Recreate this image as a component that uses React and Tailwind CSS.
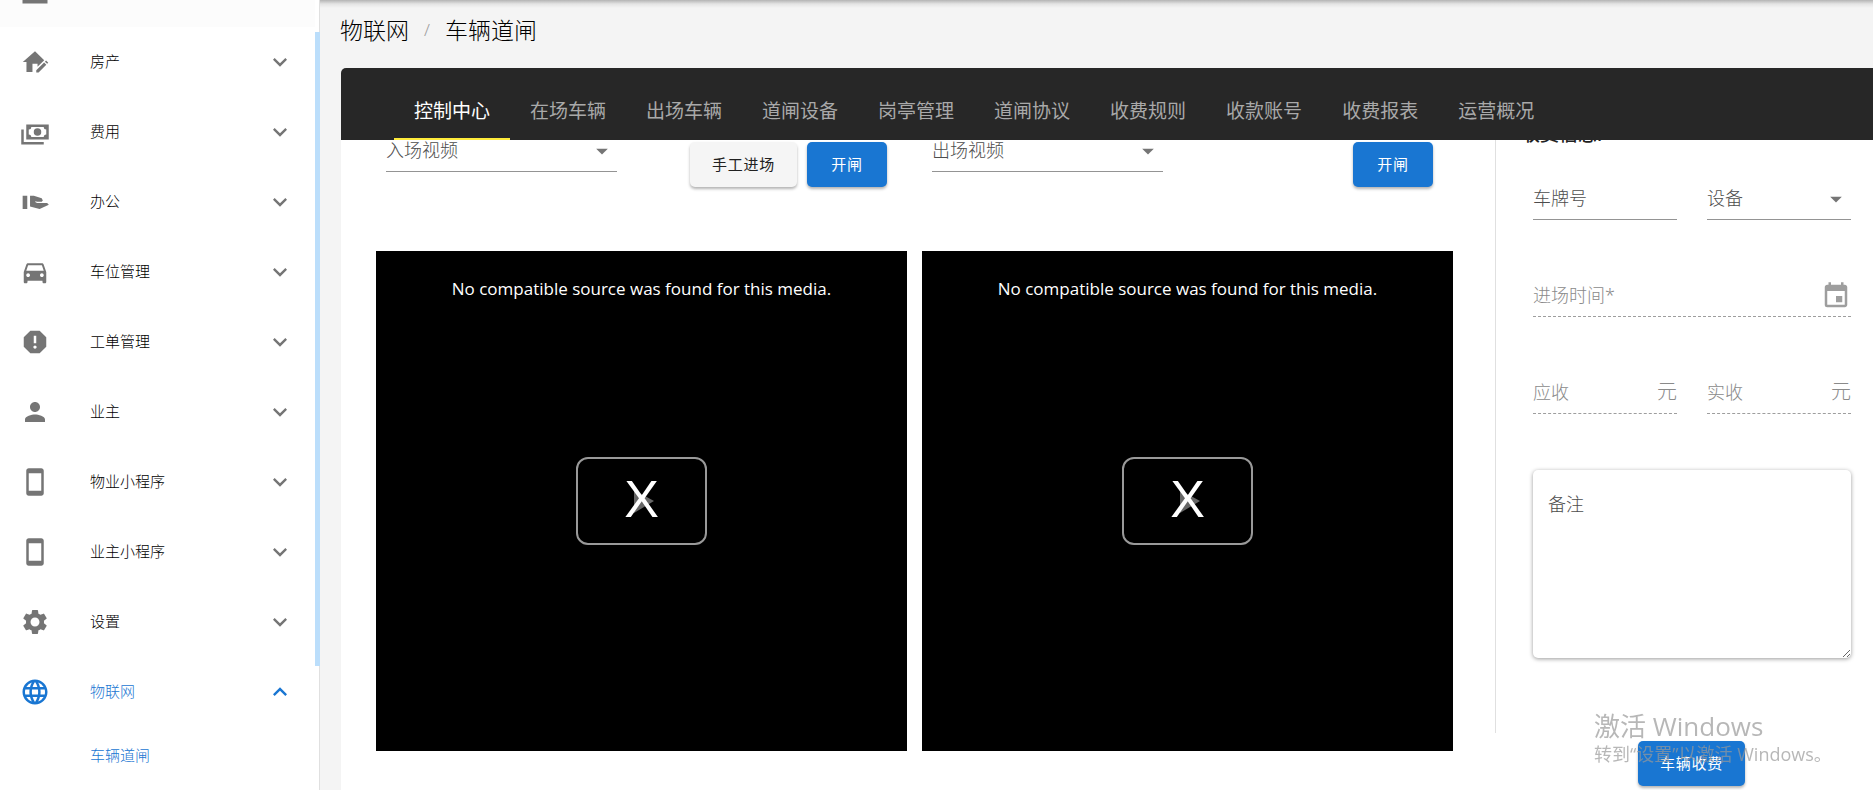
import React, { useState } from "react";
import {
  MdArrowDropDown,
  MdDirectionsCar,
  MdEvent,
  MdExpandLess,
  MdExpandMore,
  MdLanguage,
  MdPerson,
  MdReport,
  MdSettings,
  MdStayPrimaryPortrait,
} from "react-icons/md";

const HomeEditIcon = ({ className }) => (
  <svg viewBox="-1 -1 26 26" className={className} fill="currentColor">
    <path d="M12 2.6 1.4 12H4.6V20.6H9.8V13.5H14.2V16.2L20 10.4ZM21.6 10.8 23.5 12.6 22.5 13.6 20.6 11.8ZM19.9 12.5 21.8 14.4 15.1 21.1H13.1V19.2Z" />
  </svg>
);

const CashIcon = ({ className }) => (
  <svg viewBox="0 0 24 24" className={className} fill="currentColor">
    <path d="M5,6H23V18H5V6M14,9A3,3 0 0,1 17,12A3,3 0 0,1 14,15A3,3 0 0,1 11,12A3,3 0 0,1 14,9M9,8A2,2 0 0,1 7,10V14A2,2 0 0,1 9,16H19A2,2 0 0,1 21,14V10A2,2 0 0,1 19,8H9M1,10H3V20H19V22H1V10Z" />
  </svg>
);

const HandIcon = ({ className }) => (
  <svg viewBox="-1 -1 26 26" className={className} fill="currentColor">
    <path d="M1.3 6.5H5.3V18H1.3ZM7.7 6.5H11L17.8 8.8 18.8 10.6 17.8 11.8H13.8L12.4 11.3 12.2 12 13.8 12.8H22.5L24 14.4 16 18 7.7 15.8Z" />
  </svg>
);

const BuildingIcon = ({ className }) => (
  <svg viewBox="0 0 24 24" className={className} fill="currentColor">
    <path d="M2 2H22V22H2ZM4 4.5V19H6V17H9V19H11V17H13V19H20V4.5Z" />
  </svg>
);

const menuItems = [
  { label: "房产", icon: HomeEditIcon },
  { label: "费用", icon: CashIcon },
  { label: "办公", icon: HandIcon },
  { label: "车位管理", icon: MdDirectionsCar },
  { label: "工单管理", icon: MdReport },
  { label: "业主", icon: MdPerson },
  { label: "物业小程序", icon: MdStayPrimaryPortrait },
  { label: "业主小程序", icon: MdStayPrimaryPortrait },
  { label: "设置", icon: MdSettings },
  { label: "物联网", icon: MdLanguage, children: ["车辆道闸"] },
];

const tabs = [
  "控制中心",
  "在场车辆",
  "出场车辆",
  "道闸设备",
  "岗亭管理",
  "道闸协议",
  "收费规则",
  "收款账号",
  "收费报表",
  "运营概况",
];

const Sidebar = () => {
  return (
    <aside className="flex w-80 shrink-0 border-r border-[#e0e0e0] bg-white text-[15px] text-black">
      <nav className="min-w-0 flex-1">
        <div className="flex h-[27px] items-end bg-[#fcfcfc] pb-[21px] pl-5 text-[#757575]">
          <BuildingIcon className="size-[30px] shrink-0" />
        </div>
        {menuItems.map(({ label, icon: Icon, children }) => (
          <div key={label} className={children ? "text-[#1976d2]" : ""}>
            <button
              type="button"
              aria-expanded={Boolean(children)}
              className="flex h-[70px] w-full items-center pr-[21px] pl-5"
            >
              <span className={children ? "" : "text-[#757575]"}>
                <Icon className="size-[30px]" />
              </span>
              <span className="ml-10 flex-1 pb-0.5 text-left">{label}</span>
              {children ? (
                <MdExpandLess className="size-7" />
              ) : (
                <MdExpandMore className="size-7 text-[#757575]" />
              )}
            </button>
            {children?.map((child) => (
              <a key={child} href="#gate" className="flex h-[58px] items-center pb-0.5 pl-[90px]">
                {child}
              </a>
            ))}
          </div>
        ))}
      </nav>
      {/* Scroll position */}
      <div className="-mr-px mt-8 h-[634px] w-[5px] bg-[#bbdefb]"></div>
    </aside>
  );
};

const SelectField = ({ label }) => (
  <label className="relative block h-8 w-full border-b border-[#949494] text-[#4d4d4d]">
    <select
      aria-label={label}
      className="block h-5 w-full appearance-none bg-transparent text-[18px] leading-5 outline-none"
    >
      <option>{label}</option>
    </select>
    <MdArrowDropDown className="pointer-events-none absolute -top-[3px] right-px size-7 text-[#757575]" />
  </label>
);

const Button = ({ children, plain }) => (
  <button
    type="button"
    className={`h-[45px] min-w-20 rounded-[5px] px-[22px] text-[15px] font-normal tracking-wider whitespace-nowrap shadow-[0_2px_3px_rgba(0,0,0,0.3)] ${
      plain ? "bg-[#f5f5f5] text-[#212121]" : "bg-[#1976d2] text-white"
    }`}
  >
    {children}
  </button>
);

const VideoPanel = ({ label, manual }) => (
  <section className="min-w-0">
    <div className="flex h-[111px] items-start justify-between pr-5 pl-2.5">
      <div className="w-[231px]">
        <SelectField label={label} />
      </div>
      <div className="flex gap-2.5 pt-0.5">
        {manual && <Button plain>手工进场</Button>}
        <Button>开闸</Button>
      </div>
    </div>
    <div className="relative flex h-[500px] items-center justify-center bg-black text-white">
      <p className="absolute inset-x-0 top-6 text-center font-['Open_Sans',sans-serif] text-[17px] leading-7 font-normal">
        No compatible source was found for this media.
      </p>
      <button
        type="button"
        aria-label="播放"
        className="flex h-[88px] w-[131px] items-center justify-center rounded-xl border-2 border-[#999999]"
      >
        <svg viewBox="0 0 24 24" className="size-6">
          <path d="M4 1 L24 12 L4 24Z" fill="#666666" />
        </svg>
      </button>
      <span className="pointer-events-none absolute inset-0 flex items-center justify-center pb-1 font-['Liberation_Sans',sans-serif] text-[52px] leading-none">
        X
      </span>
    </div>
  </section>
);

const MoneyField = ({ label }) => (
  <label className="flex h-8 items-start border-b border-dashed border-[#9e9e9e] text-[#8a8a8a]">
    <input
      aria-label={label}
      placeholder={label}
      disabled
      className="h-5 w-full min-w-0 text-[18px] placeholder:text-[#8a8a8a]"
    />
    <span className="text-[20px] leading-5">元</span>
  </label>
);

const ChargeForm = () => (
  <form className="w-[378px] shrink-0 pr-[22px]">
    <div className="flow-root h-[593px] border-l border-[#e0e0e0] pl-[25px]">
      <h2 className="-mt-5 h-[68px] text-[19px] leading-7 font-medium text-[#212121]">收费信息:</h2>
      <div className="grid grid-cols-2 gap-x-[30px] pl-3">
        <input
          aria-label="车牌号"
          placeholder="车牌号"
          className="block h-8 w-full border-b border-[#949494] pb-3 text-[18px] outline-none placeholder:text-[#4d4d4d]"
        />
        <SelectField label="设备" />
        <label className="col-span-2 mt-[65px] flex h-8 items-start border-b border-dashed border-[#9e9e9e] text-[#9e9e9e]">
          <input
            aria-label="进场时间"
            placeholder="进场时间*"
            disabled
            className="h-5 w-full min-w-0 text-[18px] placeholder:text-[#8a8a8a]"
          />
          <MdEvent className="-mt-1 size-[30px] shrink-0" />
        </label>
        <div className="mt-[65px]">
          <MoneyField label="应收" />
        </div>
        <div className="mt-[65px]">
          <MoneyField label="实收" />
        </div>
        <textarea
          aria-label="备注"
          placeholder="备注"
          className="col-span-2 mt-14 block h-[188px] w-full resize-y rounded-[5px] bg-white px-[15px] py-[22px] text-[18px] leading-6 shadow-[0_1px_4px_rgba(0,0,0,0.4)] outline-none placeholder:text-[#4d4d4d]"
        />
      </div>
    </div>
    <div className="mt-2 flex justify-center pl-[37px]">
      <Button>车辆收费</Button>
    </div>
  </form>
);

const App = () => {
  const [activeTab, setActiveTab] = useState(tabs[0]);

  return (
    <div className="flex h-screen overflow-hidden bg-[#f4f4f4] font-['Noto_Sans','Noto_Sans_CJK_SC',sans-serif] font-light">
      <Sidebar />
      <main className="flex min-w-0 flex-1 flex-col">
        {/* Shadow of the app bar above */}
        <div className="h-2 shrink-0 bg-linear-to-b from-[#b4b4b4] via-[#e4e4e4] to-[#f4f4f4]"></div>
        <nav className="flex h-[60px] shrink-0 items-center pb-4 pl-5 text-[23px] text-black">
          <a href="#iot">物联网</a>
          <span className="w-9 text-center text-[17px] text-[#9e9e9e]">/</span>
          <a href="#gate">车辆道闸</a>
        </nav>

        <div
          role="tablist"
          className="relative z-10 ml-[21px] flex h-[72px] shrink-0 items-end rounded-tl-[5px] bg-[#272727] pl-[53px]"
        >
          {tabs.map((tab) => (
            <button
              key={tab}
              type="button"
              role="tab"
              aria-selected={tab === activeTab}
              onClick={() => setActiveTab(tab)}
              className={`h-[60px] border-b-2 px-5 pt-1 text-[19px] font-normal whitespace-nowrap ${
                tab === activeTab
                  ? "border-[#ffeb3b] text-white"
                  : "border-transparent text-[#a9a9a9]"
              }`}
            >
              {tab}
            </button>
          ))}
        </div>

        <div className="ml-[21px] flex flex-1 overflow-hidden bg-white">
          <div className="grid min-w-0 flex-1 grid-cols-2 gap-[15px] pr-[42px] pl-[35px]">
            <VideoPanel label="入场视频" manual />
            <VideoPanel label="出场视频" />
          </div>
          <ChargeForm />
        </div>
      </main>

      {/* System watermark */}
      <div className="pointer-events-none fixed right-[44px] bottom-6 z-20 w-[235px] font-['Open_Sans','Noto_Sans_CJK_SC',sans-serif] font-normal text-[#999999]/70">
        <p className="text-[26px] leading-8">激活 Windows</p>
        <p className="text-[18px] leading-6 whitespace-nowrap">转到“设置”以激活 Windows。</p>
      </div>
    </div>
  );
};

export default App;
